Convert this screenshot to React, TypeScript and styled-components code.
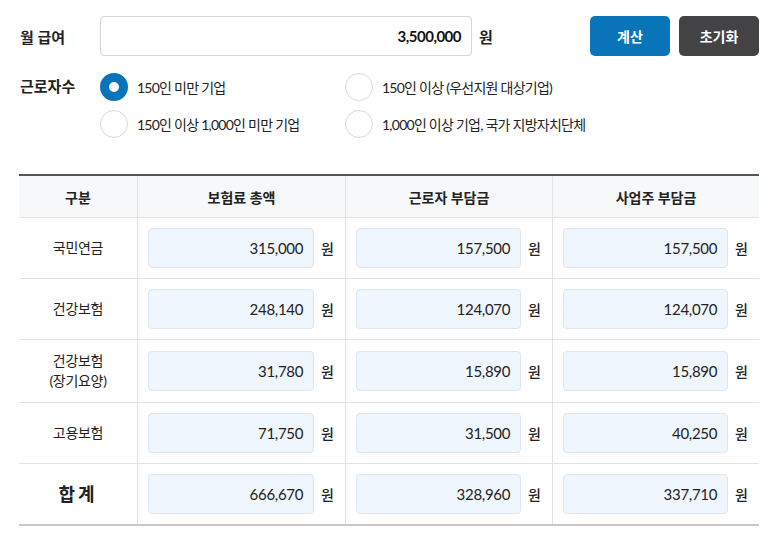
import React from "react";
import styled, { createGlobalStyle } from "styled-components";

const Global = createGlobalStyle`
  html, body { margin: 0; padding: 0; background: #fff; }
  body { font-family: "Lato", "Noto Sans CJK KR", sans-serif; color: #222; }
  * { box-sizing: border-box; }
`;

const Page = styled.div`
  width: 769px;
  padding: 16px 10px 0 19px;
`;

const TopRow = styled.div`
  display: flex;
  align-items: center;
  height: 40px;
`;

const FieldLabel = styled.div`
  width: 81px;
  font-size: 15px;
  font-weight: 700;
  color: #222;
  padding-left: 1px;
`;

const SalaryInput = styled.div`
  width: 372px;
  height: 40px;
  border: 1px solid #d6d6d6;
  border-radius: 4px;
  display: flex;
  align-items: center;
  justify-content: flex-end;
  padding-right: 10px;
  font-size: 15px;
  font-weight: 700;
  letter-spacing: -0.5px;
  color: #111;
`;

const Unit = styled.span<{ $bold?: boolean }>`
  margin-left: 7px;
  font-size: ${(p) => (p.$bold ? 15 : 14)}px;
  font-weight: ${(p) => (p.$bold ? 700 : 500)};
  color: #222;
  white-space: nowrap;
`;

const Buttons = styled.div`
  margin-left: auto;
  display: flex;
  gap: 9px;
`;

const Btn = styled.button<{ $dark?: boolean }>`
  width: 80px;
  height: 40px;
  border: none;
  border-radius: 5px;
  background: ${(p) => (p.$dark ? "#434345" : "#0a74b8")};
  color: #fff;
  font-family: inherit;
  font-size: 14px;
  font-weight: 700;
`;

const WorkerRow = styled.div`
  display: flex;
  margin-top: 17px;
`;

const WorkerLabel = styled(FieldLabel)`
  padding-top: 2px;
`;

const RadioGrid = styled.div`
  display: grid;
  grid-template-columns: 245px 260px;
  row-gap: 9px;
`;

const RadioItem = styled.label`
  display: flex;
  align-items: center;
  gap: 9px;
  height: 28px;
  font-size: 14px;
  color: #222;
  letter-spacing: -0.75px;
`;

const RadioDot = styled.span<{ $on?: boolean }>`
  width: 28px;
  height: 28px;
  border-radius: 50%;
  flex: none;
  ${(p) =>
    p.$on
      ? `border: 9px solid #0a74b8; background: #fff;`
      : `border: 1px solid #d9d9d9; background: #fff;`}
`;

const Table = styled.div`
  margin-top: 36px;
  width: 740px;
  border-top: 2px solid #555;
  border-bottom: 2px solid #c8c8c8;
  display: grid;
  grid-template-columns: 118px 208px 207px 207px;
`;

const Head = styled.div<{ $first?: boolean }>`
  height: 42px;
  background: #f7f8fa;
  display: flex;
  align-items: center;
  justify-content: center;
  font-size: 14px;
  font-weight: 700;
  color: #222;
  border-bottom: 1px solid #e3e3e3;
  border-left: ${(p) => (p.$first ? "none" : "1px solid #e3e3e3")};
`;

const Cell = styled.div<{ $first?: boolean; $h: number; $last?: boolean }>`
  height: ${(p) => p.$h}px;
  display: flex;
  align-items: center;
  justify-content: ${(p) => (p.$first ? "center" : "flex-start")};
  padding: ${(p) => (p.$first ? "0" : "0 11px 0 10px")};
  border-bottom: ${(p) => (p.$last ? "none" : "1px solid #e3e3e3")};
  border-left: ${(p) => (p.$first ? "none" : "1px solid #e3e3e3")};
`;

const RowName = styled.div<{ $total?: boolean }>`
  text-align: center;
  font-size: ${(p) => (p.$total ? 18 : 14)}px;
  font-weight: ${(p) => (p.$total ? 700 : 400)};
  letter-spacing: ${(p) => (p.$total ? "3px" : "-0.3px")};
  line-height: 1.45;
  color: #222;
`;

const Amount = styled.div`
  flex: 1;
  height: 40px;
  background: #f0f6fd;
  border: 1px solid #dfe6ee;
  border-radius: 4px;
  display: flex;
  align-items: center;
  justify-content: flex-end;
  padding-right: 10px;
  font-size: 15px;
  letter-spacing: -0.3px;
  color: #222;
`;

type Row = { name: React.ReactNode; total?: boolean; vals: string[]; h: number };

const rows: Row[] = [
  { name: "국민연금", vals: ["315,000", "157,500", "157,500"], h: 61 },
  { name: "건강보험", vals: ["248,140", "124,070", "124,070"], h: 61 },
  {
    name: (
      <>
        건강보험
        <br />
        (장기요양)
      </>
    ),
    vals: ["31,780", "15,890", "15,890"],
    h: 63,
  },
  { name: "고용보험", vals: ["71,750", "31,500", "40,250"], h: 61 },
  { name: "합계", total: true, vals: ["666,670", "328,960", "337,710"], h: 60 },
];

const radios = [
  { label: "150인 미만 기업", on: true },
  { label: "150인 이상 (우선지원 대상기업)" },
  { label: "150인 이상 1,000인 미만 기업" },
  { label: "1,000인 이상 기업, 국가 지방자치단체" },
];

export default function App() {
  return (
    <>
      <Global />
      <Page>
        <TopRow>
          <FieldLabel>월 급여</FieldLabel>
          <SalaryInput>3,500,000</SalaryInput>
          <Unit $bold>원</Unit>
          <Buttons>
            <Btn>계산</Btn>
            <Btn $dark>초기화</Btn>
          </Buttons>
        </TopRow>
        <WorkerRow>
          <WorkerLabel>근로자수</WorkerLabel>
          <RadioGrid>
            {radios.map((r) => (
              <RadioItem key={r.label}>
                <RadioDot $on={r.on} />
                {r.label}
              </RadioItem>
            ))}
          </RadioGrid>
        </WorkerRow>
        <Table>
          <Head $first>구분</Head>
          <Head>보험료 총액</Head>
          <Head>근로자 부담금</Head>
          <Head>사업주 부담금</Head>
          {rows.map((row, i) => {
            const last = i === rows.length - 1;
            return (
              <React.Fragment key={i}>
                <Cell $first $h={row.h} $last={last}>
                  <RowName $total={row.total}>{row.name}</RowName>
                </Cell>
                {row.vals.map((v, j) => (
                  <Cell key={j} $h={row.h} $last={last}>
                    <Amount>{v}</Amount>
                    <Unit>원</Unit>
                  </Cell>
                ))}
              </React.Fragment>
            );
          })}
        </Table>
      </Page>
    </>
  );
}
